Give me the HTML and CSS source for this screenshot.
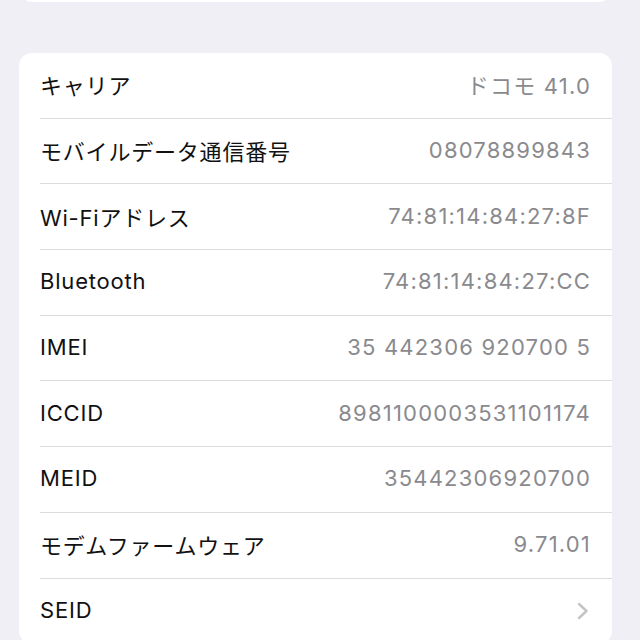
FILE: index.html
```html
<!DOCTYPE html>
<html lang="ja">
<head>
    <meta charset="UTF-8">
    <meta name="viewport" content="width=device-width, initial-scale=1.0">
    <title>情報</title>
    <link rel="stylesheet" href="styles.css">
</head>
<body>
    <div class="page">
        <!-- 上のグループ（最後の部分だけ見えている） -->
        <section class="group group-top"></section>

        <section class="group">
            <div class="row"><div class="row-inner"><span class="label">キャリア</span><span class="value">ドコモ 41.0</span></div></div>
            <div class="row"><div class="row-inner"><span class="label">モバイルデータ通信番号</span><span class="value">08078899843</span></div></div>
            <div class="row"><div class="row-inner"><span class="label">Wi-Fiアドレス</span><span class="value">74:81:14:84:27:8F</span></div></div>
            <div class="row"><div class="row-inner"><span class="label">Bluetooth</span><span class="value">74:81:14:84:27:CC</span></div></div>
            <div class="row"><div class="row-inner"><span class="label">IMEI</span><span class="value">35 442306 920700 5</span></div></div>
            <div class="row"><div class="row-inner"><span class="label">ICCID</span><span class="value">8981100003531101174</span></div></div>
            <div class="row"><div class="row-inner"><span class="label">MEID</span><span class="value">35442306920700</span></div></div>
            <div class="row"><div class="row-inner"><span class="label">モデムファームウェア</span><span class="value">9.71.01</span></div></div>
            <div class="row"><div class="row-inner"><span class="label">SEID</span>
                <svg class="chevron" width="12" height="18" viewBox="0 0 12 18"><path d="M2 2 L9.5 9 L2 16" fill="none" stroke="#c4c4c7" stroke-width="2.4" stroke-linecap="round" stroke-linejoin="round"/></svg>
            </div></div>
        </section>
    </div>
</body>
</html>
```

FILE: styles.css
```css
/* Estilos generales */
body {
    margin: 0;
    padding: 0;
    background-color: #f0eff5;
    font-family: Inter, "Noto Sans CJK JP", sans-serif;
    color: #111;
}

.page {
    height: 640px;
    overflow: hidden;
    padding: 0 28px 0 19px;
}

.group {
    background-color: #fff;
    border-radius: 13px;
}

/* solo se ve el borde inferior */
.group-top {
    height: 40px;
    margin-top: -38px;
    margin-bottom: 51px;
}

.row {
    padding-left: 21px;
}

.row-inner {
    height: 65.7px;
    box-sizing: border-box;
    display: flex;
    align-items: center;
    justify-content: space-between;
    padding-right: 21px;
    border-bottom: 1.5px solid #dcdcdf;
}

.row:last-child .row-inner {
    border-bottom: none;
}

.label {
    font-size: 22px;
    letter-spacing: 0.8px;
    margin-top: -2px;
}

.value {
    font-size: 22px;
    letter-spacing: 1.2px;
    color: #8a8a8e;
    margin-top: -2px;
}

.chevron {
    margin-right: 2px;
}
```
